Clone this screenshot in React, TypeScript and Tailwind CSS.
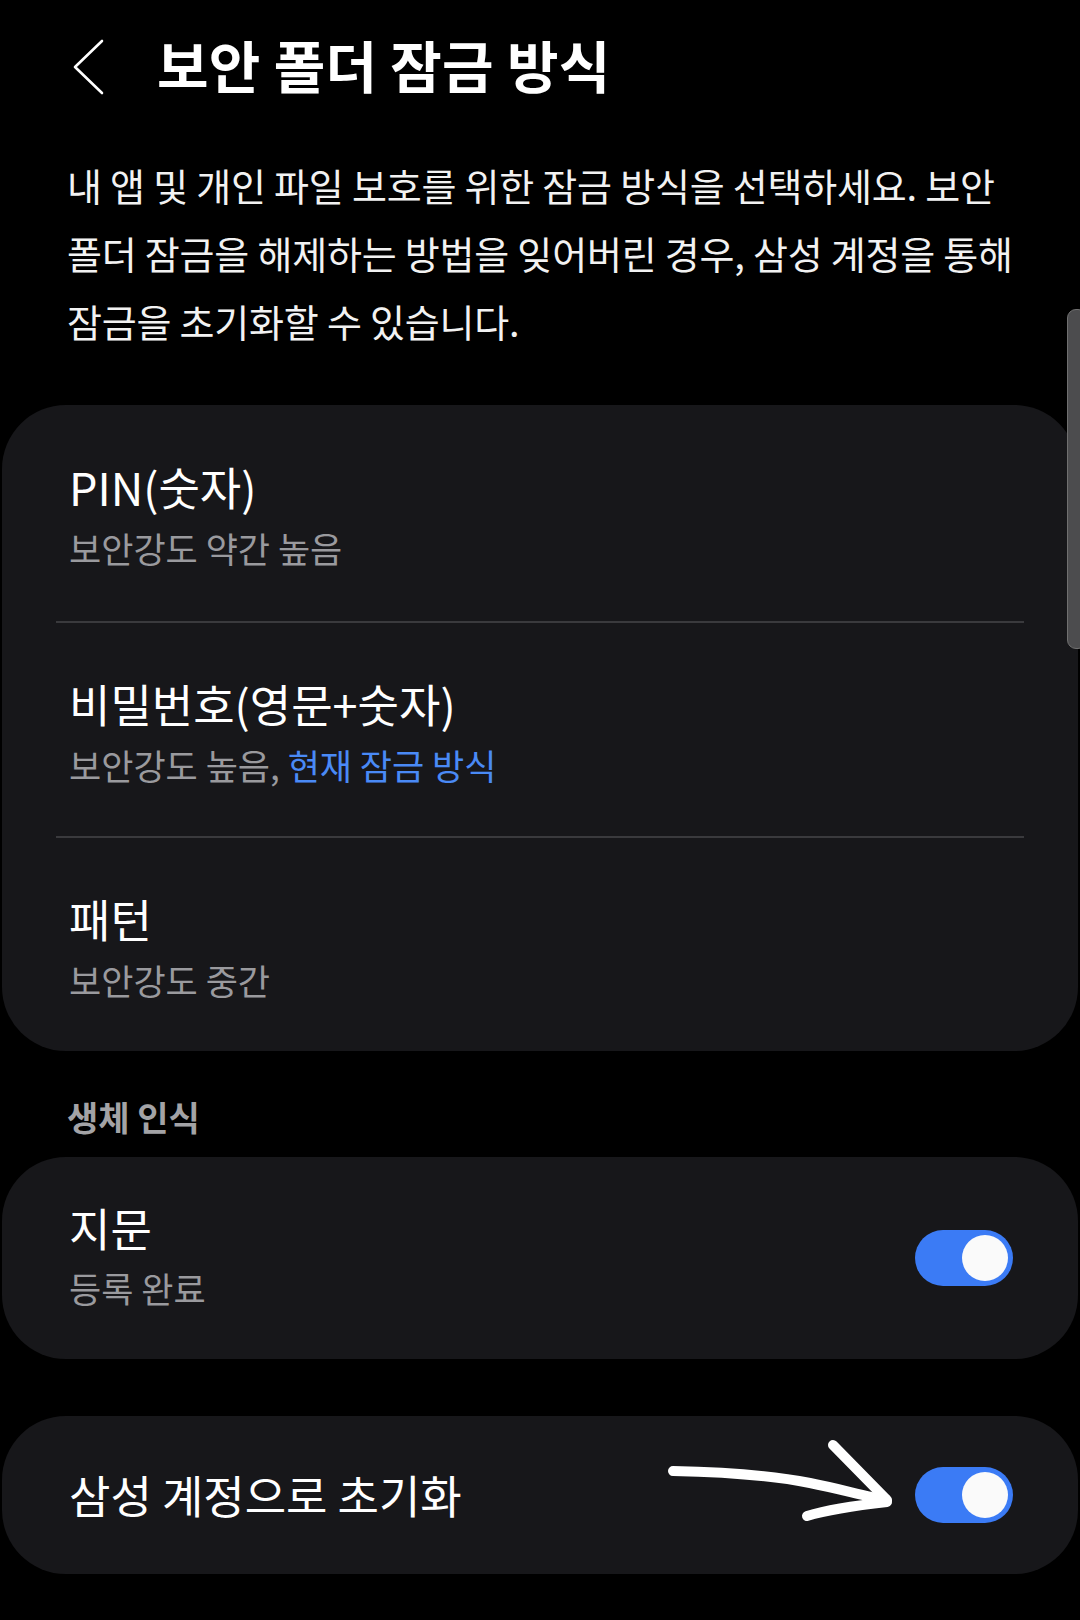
import React from "react";

function Toggle() {
  return (
    <div className="relative h-[56px] w-[98px] shrink-0 rounded-full bg-[#3b7bf5]">
      <div className="absolute right-[5px] top-[5px] h-[46px] w-[46px] rounded-full bg-[#fafafa]" />
    </div>
  );
}

function Item({
  title,
  sub,
  h,
  pt,
}: {
  title: string;
  sub: React.ReactNode;
  h: string;
  pt: string;
}) {
  return (
    <div className={`flex flex-col pl-[67px] ${h} ${pt}`}>
      <div className="text-[45px] leading-[52px] text-white whitespace-nowrap">{title}</div>
      <div className="mt-[15px] text-[35px] leading-[40px] text-[#9a9a9e] whitespace-nowrap">
        {sub}
      </div>
    </div>
  );
}

export default function App() {
  return (
    <div className="relative h-[1620px] w-[1080px] overflow-hidden bg-black font-['Noto_Sans_CJK_KR','Noto_Sans',sans-serif]">
      {/* Header */}
      <div className="flex items-start pt-[34px]">
        <svg
          className="ml-[72px] mt-[1px] shrink-0"
          width="34"
          height="60"
          viewBox="0 0 34 60"
          fill="none"
        >
          <polyline
            points="30,6 3,32 30,58"
            stroke="white"
            strokeWidth="2.6"
            strokeLinecap="round"
            strokeLinejoin="round"
          />
        </svg>
        <h1 className="ml-[51px] text-[56px] font-bold leading-[60px] tracking-[0.3px] text-white whitespace-nowrap">
          보안 폴더 잠금 방식
        </h1>
      </div>

      {/* Description */}
      <p className="mt-[56px] pl-[67px] text-[38px] leading-[68px] tracking-[-0.2px] text-[#f2f2f2] whitespace-nowrap">
        내 앱 및 개인 파일 보호를 위한 잠금 방식을 선택하세요. 보안
        <br />
        폴더 잠금을 해제하는 방법을 잊어버린 경우, 삼성 계정을 통해
        <br />
        잠금을 초기화할 수 있습니다.
      </p>

      {/* Lock methods card */}
      <div className="mx-[2px] mt-[50px] flex flex-col rounded-[64px] bg-[#17171a]">
        <Item title="PIN(숫자)" sub="보안강도 약간 높음" h="h-[216px]" pt="pt-[56px]" />
        <div className="mx-[54px] h-[2px] bg-[#3a3a3d]" />
        <Item
          title="비밀번호(영문+숫자)"
          sub={
            <>
              보안강도 높음, <span className="text-[#4a8af6]">현재 잠금 방식</span>
            </>
          }
          h="h-[213px]"
          pt="pt-[55px]"
        />
        <div className="mx-[54px] h-[2px] bg-[#3a3a3d]" />
        <Item title="패턴" sub="보안강도 중간" h="h-[213px]" pt="pt-[55px]" />
      </div>

      {/* Biometrics header */}
      <div className="mt-[46px] pl-[67px] text-[34px] font-semibold leading-[40px] text-[#a3a3a6]">
        생체 인식
      </div>

      {/* Fingerprint card */}
      <div className="mx-[2px] mt-[20px] flex h-[202px] items-center justify-between rounded-[64px] bg-[#17171a] pl-[67px] pr-[65px]">
        <div className="flex flex-col pb-[6px]">
          <div className="text-[45px] leading-[52px] text-white">지문</div>
          <div className="mt-[14px] text-[35px] leading-[40px] text-[#9a9a9e]">
            등록 완료
          </div>
        </div>
        <Toggle />
      </div>

      {/* Samsung account reset card */}
      <div className="mx-[2px] mt-[57px] flex h-[158px] items-center justify-between rounded-[64px] bg-[#17171a] pl-[67px] pr-[65px]">
        <div className="text-[45px] leading-[52px] text-white whitespace-nowrap">삼성 계정으로 초기화</div>
        <Toggle />
      </div>

      {/* Scrollbar overlay */}
      <div className="absolute left-[1067px] top-[309px] h-[340px] w-[20px] rounded-[9px] border-[1.5px] border-[#707070] bg-[#4c4c4e]" />

      {/* Hand-drawn arrow annotation */}
      <svg
        className="absolute left-0 top-0 pointer-events-none"
        width="1080"
        height="1620"
        viewBox="0 0 1080 1620"
        fill="none"
      >
        <path
          d="M673 1471 C 720 1472, 770 1475, 810 1483 C 840 1489, 865 1496, 887 1500"
          stroke="white"
          strokeWidth="10"
          strokeLinecap="round"
          strokeLinejoin="round"
        />
        <path
          d="M833 1445 L 886 1499"
          stroke="white"
          strokeWidth="10"
          strokeLinecap="round"
        />
        <path
          d="M807 1516 C 830 1509, 860 1505, 887 1502"
          stroke="white"
          strokeWidth="10"
          strokeLinecap="round"
        />
      </svg>
    </div>
  );
}
